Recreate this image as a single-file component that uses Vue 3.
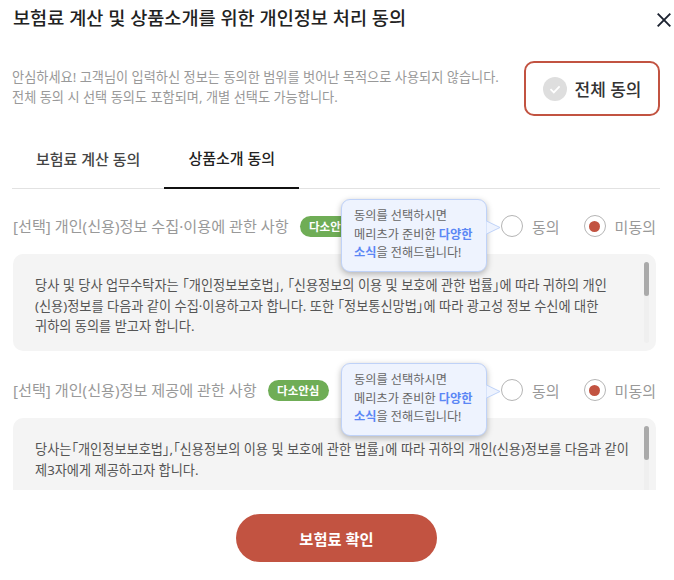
<script setup>
import { reactive, ref } from 'vue';

const activeTab = ref(1);
const tabs = ['보험료 계산 동의', '상품소개 동의'];

const sections = reactive([
  {
    id: 'collect',
    title: '[선택] 개인(신용)정보 수집·이용에 관한 사항',
    agree: false,
    text: '당사 및 당사 업무수탁자는 「개인정보보호법」, 「신용정보의 이용 및 보호에 관한 법률」에 따라 귀하의 개인(신용)정보를 다음과 같이 수집·이용하고자 합니다. 또한 「정보통신망법」에 따라 광고성 정보 수신에 대한 귀하의 동의를 받고자 합니다.'
  },
  {
    id: 'provide',
    title: '[선택] 개인(신용)정보 제공에 관한 사항',
    agree: false,
    text: '당사는「개인정보보호법」,「신용정보의 이용 및 보호에 관한 법률」에 따라 귀하의 개인(신용)정보를 다음과 같이 제3자에게 제공하고자 합니다.'
  }
]);
</script>

<template>
  <div class="modal">
    <header class="modal-header">
      <h2>보험료 계산 및 상품소개를 위한 개인정보 처리 동의</h2>
      <button class="close" type="button" aria-label="닫기">
        <svg width="14" height="14" viewBox="0 0 14 14">
          <path d="M0.7 0.7L13.3 13.3M13.3 0.7L0.7 13.3" stroke="#1c2230" stroke-width="1.9" fill="none" />
        </svg>
      </button>
    </header>

    <div class="intro">
      <p>
        안심하세요! 고객님이 입력하신 정보는 동의한 범위를 벗어난 목적으로 사용되지 않습니다.<br>
        전체 동의 시 선택 동의도 포함되며, 개별 선택도 가능합니다.
      </p>
      <button class="agree-all" type="button">
        <svg width="24" height="24" viewBox="0 0 24 24">
          <circle cx="12" cy="12" r="12" fill="#dedede" />
          <path d="M7.5 12.2L10.8 15.4L16.6 9.4" stroke="#fff" stroke-width="1.8" fill="none" />
        </svg>
        <span>전체 동의</span>
      </button>
    </div>

    <nav class="tabs">
      <button
        v-for="(tab, i) in tabs"
        :key="tab"
        type="button"
        class="tab"
        :class="{ active: activeTab === i }"
        @click="activeTab = i"
      >{{ tab }}</button>
    </nav>

    <div class="content">
      <section v-for="section in sections" :key="section.id" class="section">
        <div class="section-head">
          <h3>{{ section.title }}</h3>
          <span class="badge">다소안심</span>
          <div class="choices">
            <div class="tooltip">
              동의를 선택하시면<br>
              메리츠가 준비한 <b>다양한<br>소식</b>을 전해드립니다!
              <svg class="tail" width="15" height="15" viewBox="0 0 15 15">
                <path d="M0.5 1L14 7.5L0.5 14" fill="#eef3fe" stroke="#bfd2f8" />
              </svg>
            </div>
            <label class="choice" @click="section.agree = true">
              <span class="radio" :class="{ on: section.agree }"></span>동의
            </label>
            <label class="choice" @click="section.agree = false">
              <span class="radio" :class="{ on: !section.agree }"></span>미동의
            </label>
          </div>
        </div>
        <div class="terms">
          <p>{{ section.text }}</p>
          <div class="scrollbar"><div class="thumb"></div></div>
        </div>
      </section>
    </div>

    <footer class="modal-footer">
      <button class="confirm" type="button">보험료 확인</button>
    </footer>
  </div>
</template>

<style>
html, body {
  margin: 0;
  background: #fff;
}
</style>

<style scoped>
.modal {
  width: 674px;
  height: 580px;
  display: flex;
  flex-direction: column;
  overflow: hidden;
  box-sizing: border-box;
  font-family: "Noto Sans", "Noto Sans CJK KR", sans-serif;
  font-feature-settings: "palt";
  background: #fff;
}
button {
  font-family: inherit;
  font-feature-settings: inherit;
  background: none;
  border: none;
  padding: 0;
  cursor: pointer;
}

.modal-header {
  display: flex;
  justify-content: space-between;
  padding: 5px 3px 0 13px;
  height: 41px;
  box-sizing: border-box;
}
.modal-header h2 {
  margin: 0;
  font-size: 18.6px;
  line-height: 26px;
  font-weight: 500;
  color: #222;
}
.close {
  width: 14px;
  height: 14px;
  margin-top: 8px;
  display: flex;
}

.intro {
  display: flex;
  justify-content: space-between;
  align-items: center;
  margin: 20px 14px 0 12px;
}
.intro p {
  margin: 0 0 4px;
  font-size: 13.2px;
  line-height: 20px;
  color: #999;
}
.agree-all {
  width: 136px;
  height: 55px;
  box-sizing: border-box;
  display: flex;
  align-items: center;
  justify-content: center;
  gap: 8px;
  border: 2px solid #c25341;
  border-radius: 10px;
  font-size: 17px;
  font-weight: 500;
  color: #333;
}

.tabs {
  display: flex;
  margin: 18px 14px 0 12px;
  height: 54px;
  border-bottom: 1px solid #e2e2e2;
}
.tab {
  padding: 0 24px 6px;
  height: 48px;
  font-size: 15px;
  font-weight: 500;
  color: #444;
  box-sizing: content-box;
}
.tab.active {
  color: #222;
  height: 47px;
  border-bottom: 2px solid #111;
}

.content {
  height: 301px;
  overflow: hidden;
  padding: 0 18px 0 13px;
  flex: none;
}
.section {
  padding-top: 22px;
}
.section:first-child {
  padding-top: 20px;
}
.section-head {
  display: flex;
  align-items: center;
  height: 34px;
}
.section-head h3 {
  margin: 0;
  font-size: 15.15px;
  font-weight: 400;
  line-height: 22px;
  color: #999;
}
.badge {
  margin-left: 11px;
  width: 61px;
  height: 21px;
  border-radius: 11px;
  background: #6fad56;
  color: #fff;
  font-size: 11.5px;
  font-weight: 700;
  line-height: 21px;
  text-align: center;
}
.choices {
  position: relative;
  margin-left: auto;
  display: flex;
  gap: 24px;
}
.choice {
  display: flex;
  align-items: center;
  gap: 9px;
  font-size: 15px;
  color: #999;
  cursor: pointer;
}
.radio {
  width: 22px;
  height: 22px;
  box-sizing: border-box;
  border: 1px solid #b5b5b5;
  border-radius: 50%;
  background: #fff;
  display: flex;
  align-items: center;
  justify-content: center;
}
.radio.on::after {
  content: "";
  width: 11px;
  height: 11px;
  border-radius: 50%;
  background: #c25341;
}
.tooltip {
  position: absolute;
  right: 169px;
  top: -16px;
  width: 146px;
  height: 73px;
  box-sizing: border-box;
  padding: 7px 12px;
  background: #eef3fe;
  border: 1px solid #bfd2f8;
  border-radius: 9px;
  box-shadow: 0 2px 6px rgba(0, 0, 0, 0.28);
  font-size: 12.2px;
  line-height: 18.5px;
  color: #666;
  white-space: nowrap;
  z-index: 2;
}
.tooltip b {
  color: #5b87f5;
  font-weight: 700;
}
.tail {
  position: absolute;
  left: 144px;
  top: 20px;
}

.terms {
  position: relative;
  height: 97px;
  margin-top: 11px;
  background: #f4f4f4;
  border-radius: 10px;
  padding: 21px 24px 0 22px;
  box-sizing: border-box;
}
.terms p {
  margin: 0;
  font-size: 13.2px;
  line-height: 20.5px;
  color: #555;
  word-break: keep-all;
}
.scrollbar {
  position: absolute;
  right: 7px;
  top: 8px;
  bottom: 8px;
  width: 5px;
  background: #efefef;
  border-radius: 3px;
}
.thumb {
  height: 34px;
  background: #aaa;
  border-radius: 3px;
}

.modal-footer {
  display: flex;
  justify-content: center;
  padding: 24px 1px 0 0;
}
.confirm {
  width: 201px;
  height: 48px;
  border-radius: 24px;
  background: #c25341;
  color: #fff;
  font-size: 15.3px;
  font-weight: 700;
}
</style>
